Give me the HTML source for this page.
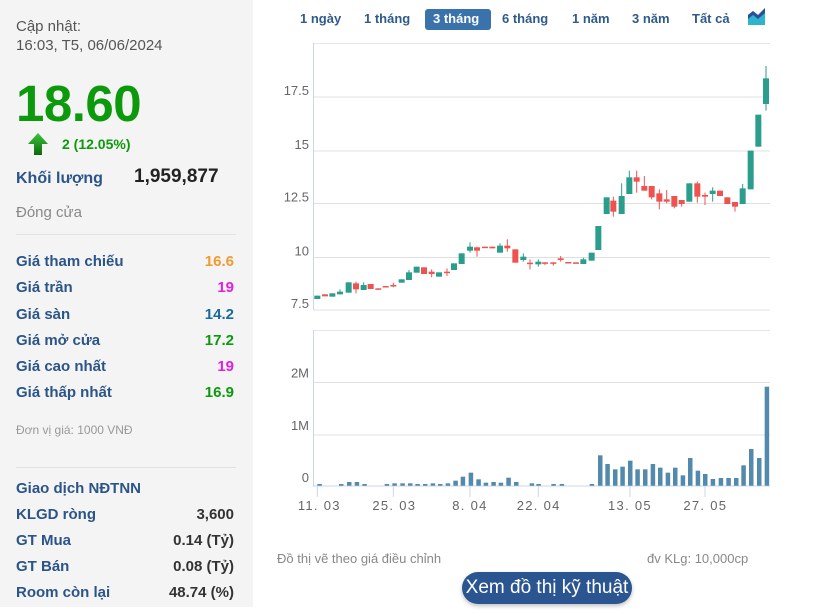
<!DOCTYPE html>
<html><head><meta charset="utf-8">
<style>
*{margin:0;padding:0;box-sizing:border-box}
body{width:835px;height:615px;background:#fff;font-family:"Liberation Sans",Arial,sans-serif;position:relative;overflow:hidden}
#left{position:absolute;left:0;top:0;width:253px;height:607px;background:#f4f4f4}
.t{position:absolute;white-space:nowrap}
.lbl{position:absolute;left:16px;font-size:15px;font-weight:bold;color:#2b5488}
.val{position:absolute;right:19px;font-size:15px;font-weight:bold;text-align:right}
.tab{position:absolute;top:11px;font-size:13px;font-weight:bold;color:#2f5a8c}
</style></head><body>
<div id="left">
  <div class="t" style="left:16px;top:17px;font-size:15px;color:#555;line-height:19px">Cập nhật:<br>16:03, T5, 06/06/2024</div>
  <div class="t" style="left:16px;top:74px;font-size:51px;font-weight:bold;color:#0c9a0c;letter-spacing:-0.5px">18.60</div>
  <svg class="t" style="left:27px;top:132px" width="22" height="24" viewBox="0 0 22 24"><defs><linearGradient id="ag" x1="0" y1="0" x2="0" y2="1"><stop offset="0" stop-color="#3ec43e"/><stop offset="1" stop-color="#0a6a0a"/></linearGradient></defs><path d="M11 1 L21 12 L15 12 L15 23 L7 23 L7 12 L1 12 Z" fill="url(#ag)"/></svg>
  <div class="t" style="left:62px;top:136px;font-size:14px;font-weight:bold;color:#0c9a0c">2 (12.05%)</div>
  <div class="lbl" style="top:170px;font-size:16px">Khối lượng</div>
  <div class="t" style="left:134px;top:166px;font-size:19px;font-weight:bold;color:#222">1,959,877</div>
  <div class="t" style="left:16px;top:204px;font-size:15px;color:#888">Đóng cửa</div>
  <div style="position:absolute;left:16px;top:234px;width:220px;height:1px;background:#e2e2e2"></div>
  <div class="lbl" style="top:253px">Giá tham chiếu</div><div class="val" style="top:253px;color:#f29a2e">16.6</div>
  <div class="lbl" style="top:279px">Giá trần</div><div class="val" style="top:279px;color:#e020e0">19</div>
  <div class="lbl" style="top:306px">Giá sàn</div><div class="val" style="top:306px;color:#1a6a9e">14.2</div>
  <div class="lbl" style="top:332px">Giá mở cửa</div><div class="val" style="top:332px;color:#0c9a0c">17.2</div>
  <div class="lbl" style="top:358px">Giá cao nhất</div><div class="val" style="top:358px;color:#e020e0">19</div>
  <div class="lbl" style="top:384px">Giá thấp nhất</div><div class="val" style="top:384px;color:#0c9a0c">16.9</div>
  <div class="t" style="left:16px;top:423px;font-size:12px;color:#999">Đơn vị giá: 1000 VNĐ</div>
  <div style="position:absolute;left:16px;top:467px;width:220px;height:1px;background:#e2e2e2"></div>
  <div class="lbl" style="top:480px">Giao dịch NĐTNN</div>
  <div class="lbl" style="top:506px">KLGD ròng</div><div class="val" style="top:506px;color:#333">3,600</div>
  <div class="lbl" style="top:532px">GT Mua</div><div class="val" style="top:532px;color:#333">0.14 (Tỷ)</div>
  <div class="lbl" style="top:558px">GT Bán</div><div class="val" style="top:558px;color:#333">0.08 (Tỷ)</div>
  <div class="lbl" style="top:584px">Room còn lại</div><div class="val" style="top:584px;color:#333">48.74 (%)</div>
</div>

<div class="tab" style="left:300px">1 ngày</div>
<div class="tab" style="left:364px">1 tháng</div>
<div style="position:absolute;left:425px;top:9px;width:66px;height:21px;background:#3a72ab;border-radius:3px"></div>
<div class="tab" style="left:433px;color:#fff">3 tháng</div>
<div class="tab" style="left:502px">6 tháng</div>
<div class="tab" style="left:572px">1 năm</div>
<div class="tab" style="left:632px">3 năm</div>
<div class="tab" style="left:692px">Tất cả</div>
<svg class="t" style="left:747px;top:7px" width="19" height="19" viewBox="0 0 19 19"><path d="M1 8 L6 4 L11 8 L18 1 L18 18 L1 18 Z" fill="#2fb4d0"/><path d="M1 8 L6 4 L11 8 L18 1 L18 6 L11 12 L6 8 L1 12 Z" fill="#2a4f9a"/></svg>

<svg id="ch" class="t" style="left:0;top:0" width="835" height="615"></svg>

<div class="t" style="left:277px;top:551px;font-size:13px;color:#888">Đồ thị vẽ theo giá điều chỉnh</div>
<div class="t" style="left:647px;top:551px;font-size:13px;color:#888">đv KLg: 10,000cp</div>
<div style="position:absolute;left:462px;top:572px;width:170px;height:32px;background:#2a5591;border-radius:16px;color:#fff;font-size:19px;text-align:center;line-height:31px;white-space:nowrap;box-shadow:0 2px 4px rgba(0,0,0,.25)">Xem đồ thị kỹ thuật</div>

<script>
var s='';
function L(x1,y1,x2,y2,c){s+='<line x1="'+x1+'" y1="'+y1+'" x2="'+x2+'" y2="'+y2+'" stroke="'+c+'" stroke-width="1"/>';}
function T(x,y,t,a){s+='<text x="'+x+'" y="'+y+'" font-size="13" fill="#666" font-family="Liberation Sans, sans-serif" text-anchor="'+(a||'end')+'">'+t+'</text>';}
L(313,43.5,770,43.5,'#e6e6e6');
[[97,'17.5'],[151,'15'],[203.5,'12.5'],[257.5,'10'],[310,'7.5']].forEach(function(g){L(313,g[0],770,g[0],'#e0e0e0');T(309,g[0]-2,g[1]);});
L(313.5,43,313.5,310,'#ccd6eb');
L(313,330.5,770,330.5,'#e6e6e6');
[[382.5,'2M'],[435,'1M']].forEach(function(g){L(313,g[0],770,g[0],'#e0e0e0');T(309,g[0]-5,g[1]);});
T(309,482,'0');
L(313.5,330,313.5,486,'#ccd6eb');
L(313,486,770,486,'#ccd6eb');
[142,370,600,805,1080,1305].forEach(function(x){var r=270+x/3;L(r,486,r,497,'#ccd6eb');});
[[148,'11. 03'],[373,'25. 03'],[600,'8. 04'],[806,'22. 04'],[1080,'13. 05'],[1306,'27. 05']].forEach(function(a){s+='<text x="'+(270+a[0]/3)+'" y="510" font-size="13" fill="#666" font-family="Liberation Sans, sans-serif" text-anchor="middle" letter-spacing="1.3">'+a[1]+'</text>';});
var xs=[142,165,187,210,236,258,281,302,325,347,370,395,417,440,462,485,507,531,552,575,600,621,645,667,690,712,736,760,780,805,825,850,872,895,918,940,965,985,1010,1030,1055,1078,1100,1123,1145,1168,1190,1213,1235,1258,1282,1305,1328,1350,1372,1395,1418,1442,1465,1488];
var c=[['g',887,897],['r',883,889],['g',880,890],['g',875,883,868],['g',847,878],['r',850,868,845,880],['g',855,870,847],['r',852,867],['r',865,868],['r',858,861],['r',855,858,848,862],['g',838,848],['g',817,840,810],['g',800,818],['r',802,822],['r',815,822,808,832],['g',817,830],['r',815,818,805,828],['g',790,810],['g',760,792],['g',740,752,727,758],['r',742,752,740,770],['r',740,744],['r',740,745],['g',737,758,730],['r',737,745,718,755],['r',748,788],['g',770,780,760,785],['r',788,792,778,808],['g',785,793,778,800],['r',787,791,787,795],['r',787,790,787,797],['r',775,780,768,785],['r',786,788],['r',787,789],['g',778,792,773],['g',758,782],['g',678,750],['g',592,642],['r',602,635,590,650],['g',588,642,550],['g',532,582,512],['r',532,545,512,578],['r',558,572,528],['r',558,592,558,598],['r',580,605,568,628],['r',598,605,570,610],['r',588,620,588,625],['r',600,612,600,620],['g',550,605],['r',550,590,545,608],['r',585,590,578,615],['g',572,582,562,605],['r',572,588],['r',592,612],['r',606,620,606,635],['g',565,612,552],['g',452,568],['g',344,440],['g',235,312,198,332]];
c.forEach(function(k,i){var x=270+xs[i]/3,col=k[0]=='g'?'#2a9d8c':'#ef5350';var t=k[1]/3,b=k[2]/3;var hi=(k[3]!==undefined?Math.min(k[3],k[1]):k[1])/3,lo=(k[4]!==undefined?k[4]:k[2])/3;L(x,hi,x,lo,col);s+='<rect x="'+(x-3)+'" y="'+t+'" width="6" height="'+Math.max(1.5,b-t)+'" fill="'+col+'"/>';});
var v=[[148,492],[213,492],[237,486],[260,486],[283,492],[350,492],[373,490],[397,490],[420,490],[442,492],[465,492],[488,490],[510,492],[533,490],[556,482],[578,470],[602,458],[625,478],[647,488],[670,486],[692,488],[715,473],[738,486],[785,490],[805,492],[850,492],[875,492],[965,492],[990,406],[1012,432],[1035,448],[1057,440],[1080,422],[1102,448],[1125,448],[1148,432],[1170,443],[1193,458],[1215,443],[1238,466],[1260,414],[1283,452],[1305,462],[1328,477],[1352,474],[1375,474],[1398,474],[1420,436],[1443,387],[1467,414],[1490,200]];
v.forEach(function(a){var x=270+a[0]/3,y=320+a[1]/3;s+='<rect x="'+(x-2)+'" y="'+y+'" width="4.5" height="'+(485.7-y)+'" fill="#5389ad"/>';});
document.getElementById('ch').innerHTML=s;
</script>
</body></html>
